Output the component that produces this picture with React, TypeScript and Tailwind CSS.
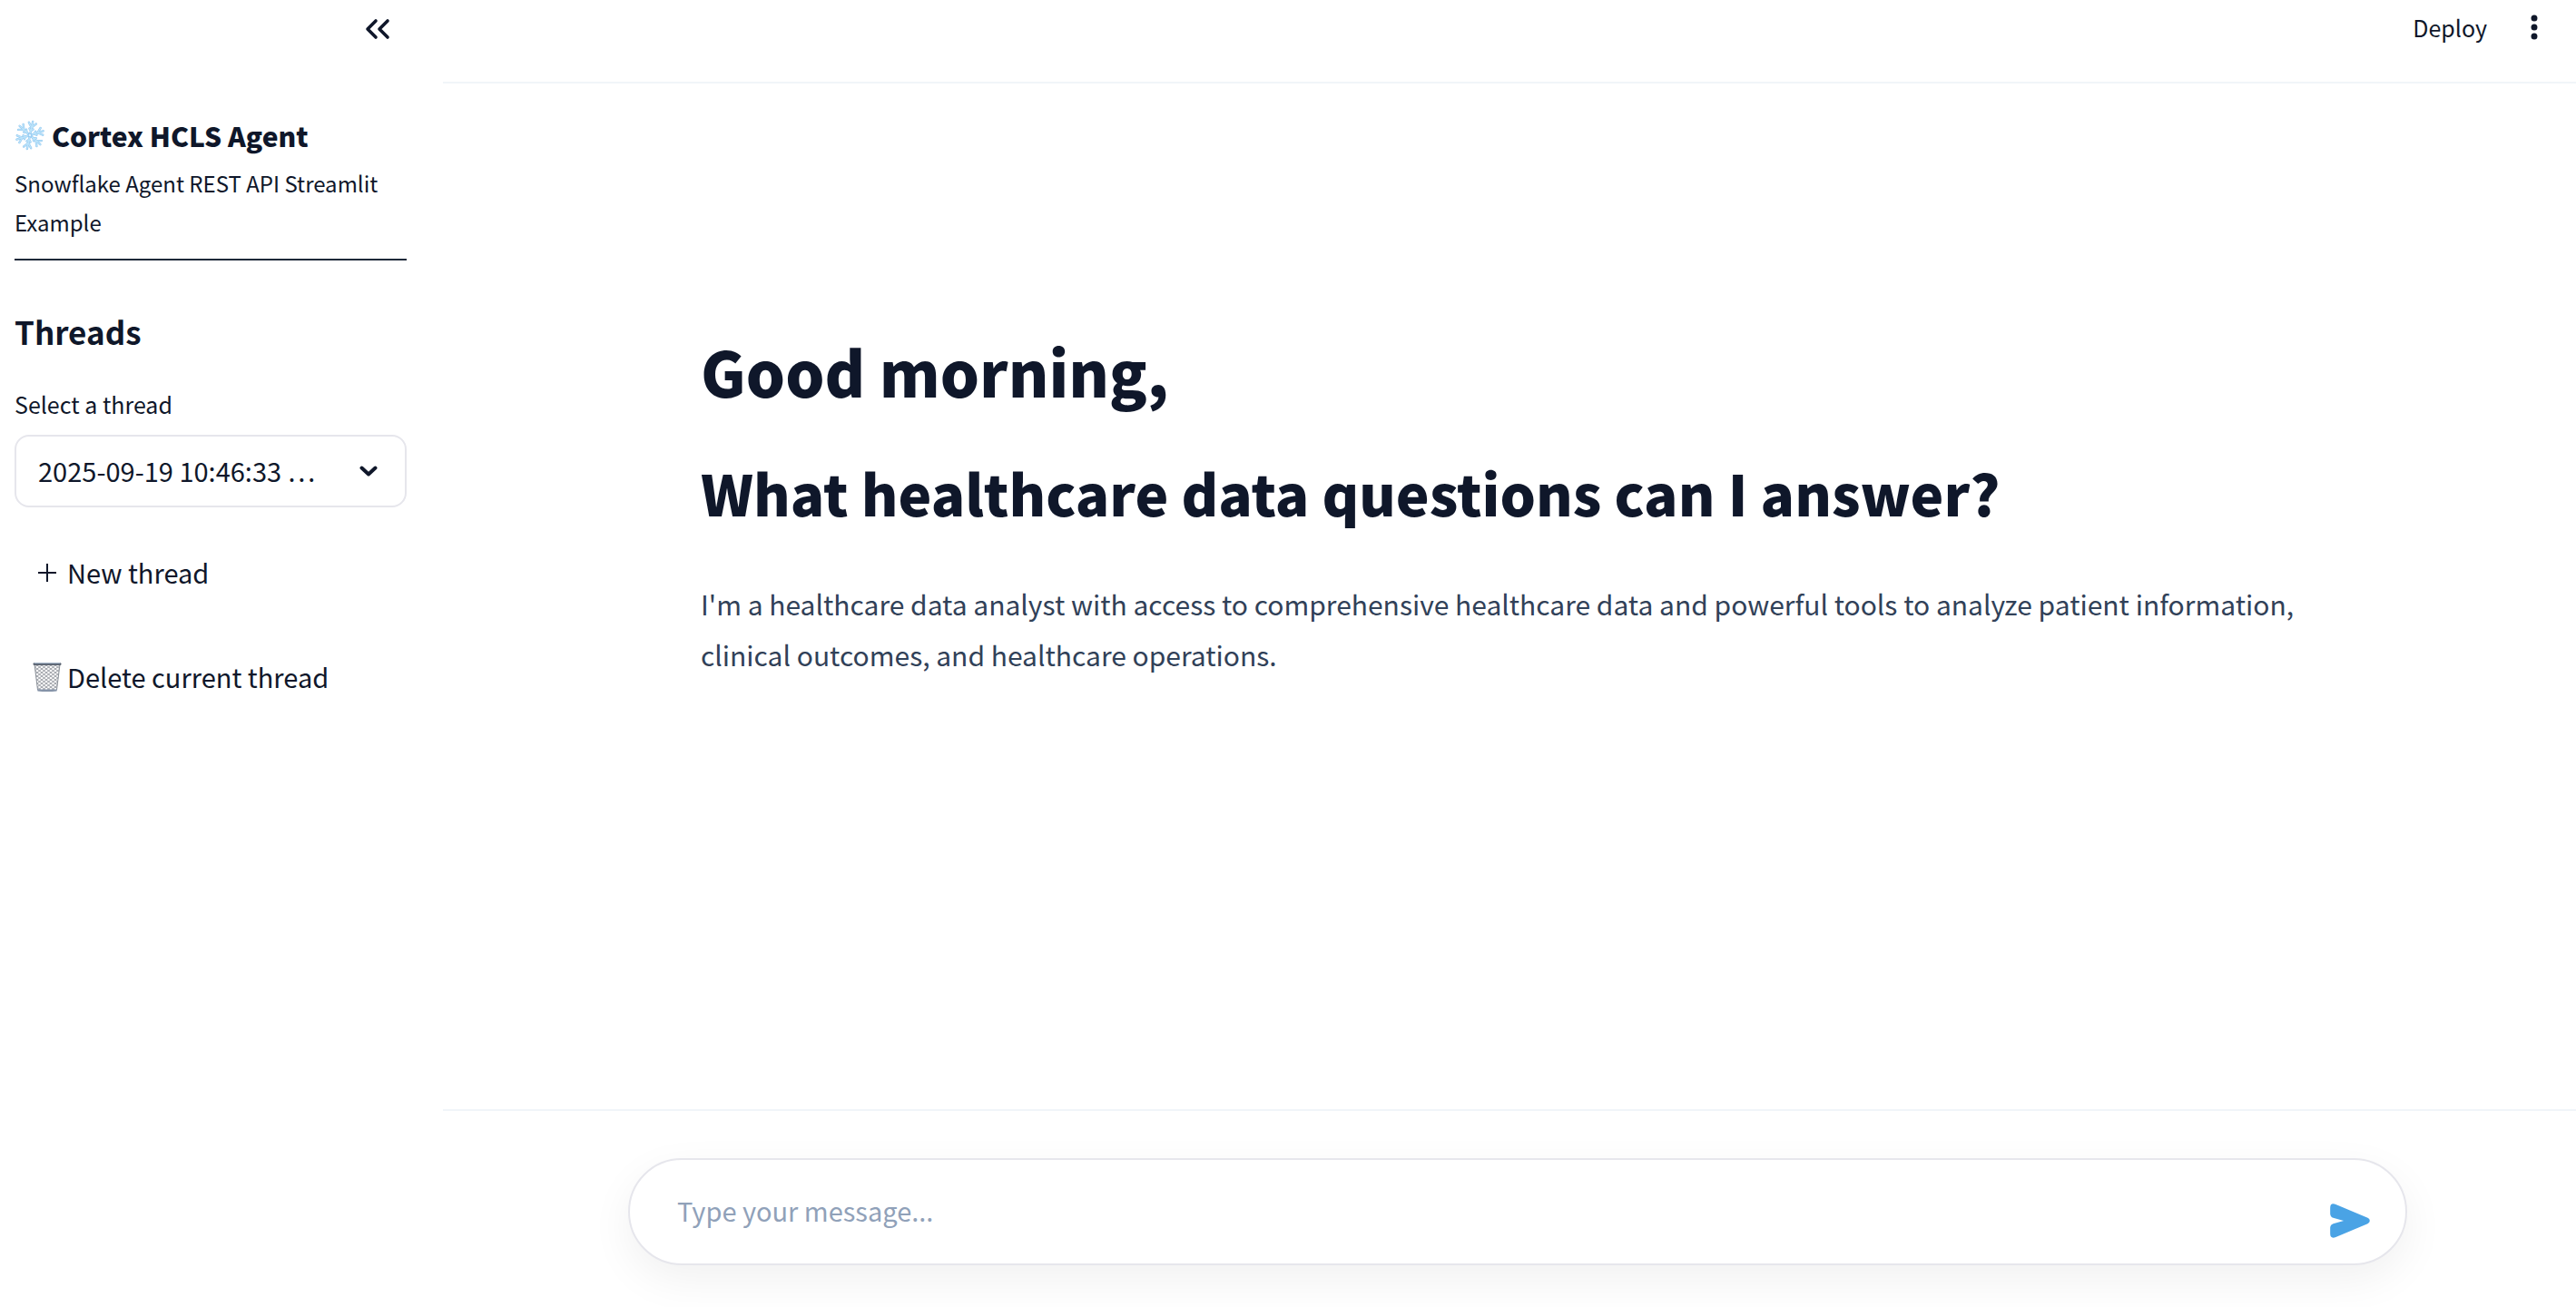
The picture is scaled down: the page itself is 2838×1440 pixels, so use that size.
import React from 'react';

const ARMS = [0, 60, 120, 180, 240, 300];

function Arm() {
  return (
    <>
      <path d="M0 0V-45" />
      <path d="M0 -26L-12 -40M0 -26L12 -40" />
      <path d="M0 -15L-6 -21M0 -15L6 -21" />
    </>
  );
}

function Snowflake() {
  return (
    <svg viewBox="-50 -50 100 100" className="size-[34px] shrink-0" fill="none" strokeLinecap="round" aria-hidden="true">
      <g transform="rotate(12)">
        <g stroke="#8fc5ef" strokeWidth="7">
          {ARMS.map((a) => (
            <g key={a} transform={`rotate(${a})`}>
              <Arm />
            </g>
          ))}
        </g>
        <g stroke="#bce4fa" strokeWidth="4">
          {ARMS.map((a) => (
            <g key={a} transform={`rotate(${a})`}>
              <Arm />
            </g>
          ))}
        </g>
        <circle r="7" fill="#92c8f1" />
        <circle r="4" fill="#dff3fe" />
      </g>
    </svg>
  );
}

function Wastebasket() {
  return (
    <svg viewBox="0 0 32 34" className="h-[34px] w-8 shrink-0" fill="none" aria-hidden="true">
      <defs>
        <pattern id="mesh" width="5" height="4" patternUnits="userSpaceOnUse">
          <path d="M0 0L5 4M5 0L0 4" stroke="#858a92" strokeWidth="0.8" />
        </pattern>
      </defs>
      <path d="M2 3H30L26.500 31H5.500Z" fill="#fafafa" />
      <path d="M2 3H30L26.500 31H5.500Z" fill="url(#mesh)" />
      <path d="M2 3L5.500 31M30 3L26.500 31" stroke="#8a9098" strokeWidth="1" />
      <rect x="0.500" y="1" width="31" height="3" rx="1.500" fill="#59616e" />
      <rect x="1.500" y="1" width="29" height="1.300" rx="0.600" fill="#a3b3c6" />
      <path d="M5 30.500H27L26.500 32.500Q16 33.500 5.500 32.500Z" fill="#8593a8" />
    </svg>
  );
}

function CollapseIcon() {
  return (
    <svg viewBox="0 0 28 24" className="h-6 w-7" fill="none" stroke="currentColor" strokeWidth="3.600" strokeLinecap="round" strokeLinejoin="round" aria-hidden="true">
      <path d="M12 3L3 12L12 21M25 3L16 12L25 21" />
    </svg>
  );
}

function SendIcon() {
  return (
    <svg viewBox="0 0 132 115" className="h-[38px] w-11" fill="#4aa3e5" aria-hidden="true">
      <path d="M0 14Q0 -3 17 2L125 48Q132 51 132 57.500Q132 64 125 67L17 113Q0 118 0 101V80Q1 70 10 67L45 57.500L10 48Q1 45 0 35Z" />
    </svg>
  );
}

function Sidebar() {
  return (
    <aside className="flex w-[488px] shrink-0 flex-col pr-10 pl-4">
      <div className="flex h-16 items-center justify-end pr-[18px]">
        <button type="button" aria-label="Collapse sidebar">
          <CollapseIcon />
        </button>
      </div>
      <div className="mt-16 flex items-center gap-[7px]">
        <Snowflake />
        <h1 className="text-[30px] leading-[42px] font-black">Cortex HCLS Agent</h1>
      </div>
      <p className="mt-2.5 text-[24px] leading-[43px]">Snowflake Agent REST API Streamlit Example</p>
      <hr className="mt-[19px] border-t-2 border-gray-800" />
      <h2 className="mt-14 text-[35px] leading-11 font-semibold">Threads</h2>
      <label htmlFor="thread" className="mt-[38px] text-[25px] leading-10">
        Select a thread
      </label>
      <div className="relative mt-3.5">
        <select
          id="thread"
          className="h-20 w-full appearance-none rounded-2xl border-2 border-[#e6e6ec] bg-white pr-20 pl-6 text-[29px] [font-feature-settings:'pwid']"
        >
          <option>2025-09-19 10:46:33 …</option>
        </select>
        <svg
          viewBox="0 0 20 12"
          className="pointer-events-none absolute top-[34px] right-8 h-3 w-5"
          fill="none"
          stroke="currentColor"
          strokeWidth="4"
          strokeLinecap="round"
          strokeLinejoin="round"
          aria-hidden="true"
        >
          <path d="M2.500 2.500L10 9.500L17.500 2.500" />
        </svg>
      </div>
      <div className="mt-8 flex flex-col gap-[35px] px-5">
        <button type="button" className="flex h-20 items-center gap-1.5 text-[29px]">
          <svg viewBox="0 0 32 34" className="h-[34px] w-8" stroke="currentColor" strokeWidth="2" aria-hidden="true">
            <path d="M6 17H26M16 7V27" />
          </svg>
          New thread
        </button>
        <button type="button" className="flex h-20 items-center gap-1.5 text-[29px]">
          <Wastebasket />
          Delete current thread
        </button>
      </div>
    </aside>
  );
}

export default function App() {
  return (
    <div className="flex min-h-screen bg-white font-['Noto_Sans_CJK_SC',sans-serif] text-[#0f172a]">
      <Sidebar />
      <div className="flex min-w-0 flex-1 flex-col">
        <header className="h-[92px] border-b-2 border-slate-100">
          <div className="flex h-[60px] items-center justify-end gap-8 pr-[26px]">
            <button type="button" className="text-[25px] leading-9">
              Deploy
            </button>
            <button type="button" aria-label="Main menu" className="flex size-10 items-center justify-center">
              <svg viewBox="0 0 8 28" className="h-7 w-2" fill="currentColor" aria-hidden="true">
                <circle cx="4" cy="4" r="3.500" />
                <circle cx="4" cy="14" r="3.500" />
                <circle cx="4" cy="24" r="3.500" />
              </svg>
            </button>
          </div>
        </header>
        <main className="flex-1 pt-[274px] pr-[266px] pl-[284px]">
          <h1 className="text-[68px] leading-[86px] font-black">Good morning,</h1>
          <h2 className="mt-[51px] text-[62px] leading-[78px] font-black">
            What healthcare data questions can I answer?
          </h2>
          <p className="mt-14 text-[30px] leading-14 text-slate-700">
            I'm a healthcare data analyst with access to comprehensive healthcare data and powerful tools to analyze
            patient information, clinical outcomes, and healthcare operations.
          </p>
        </main>
        <footer className="border-t-2 border-slate-100 pt-[52px] pr-[186px] pb-[46px] pl-[204px]">
          <form
            className="flex h-[118px] items-center rounded-full border-2 border-[#e6e6ec] bg-white pr-[39px] pl-[52px] shadow-[0_16px_48px_rgba(0,0,0,0.06)]"
            onSubmit={(e) => e.preventDefault()}
          >
            <input
              type="text"
              aria-label="Message"
              placeholder="Type your message..."
              className="h-full min-w-0 flex-1 bg-transparent pb-1 text-[29px] outline-none placeholder:text-slate-400"
            />
            <button type="submit" aria-label="Send message" className="mb-7 self-end">
              <SendIcon />
            </button>
          </form>
        </footer>
      </div>
    </div>
  );
}
